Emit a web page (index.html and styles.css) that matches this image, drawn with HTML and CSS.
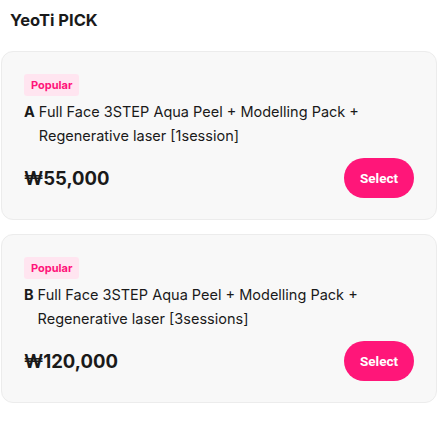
FILE: index.html
```html
<!DOCTYPE html>
<html lang="en">
<head>
<meta charset="UTF-8">
<meta name="viewport" content="width=device-width, initial-scale=1.0">
<title>YeoTi PICK</title>
<link rel="stylesheet" href="styles.css">
</head>
<body>
    <div class="pick">
        <h2 class="pickTitle">YeoTi PICK</h2>
        <div class="pickList">
            <div class="pickCard">
                <span class="badge">Popular</span>
                <div class="name">
                    <b class="letter">A</b>
                    <span>Full Face 3STEP Aqua Peel + Modelling Pack + Regenerative laser [1session]</span>
                </div>
                <div class="priceRow">
                    <div class="price">₩55,000</div>
                    <button class="selectBtn">Select</button>
                </div>
            </div>
            <div class="pickCard">
                <span class="badge">Popular</span>
                <div class="name">
                    <b class="letter">B</b>
                    <span>Full Face 3STEP Aqua Peel + Modelling Pack + Regenerative laser [3sessions]</span>
                </div>
                <div class="priceRow">
                    <div class="price">₩120,000</div>
                    <button class="selectBtn">Select</button>
                </div>
            </div>
        </div>
    </div>
</body>
</html>
```

FILE: styles.css
```css
  body {
    margin: 0;
    font-family: Inter, "Noto Sans", sans-serif;
    color: #1a1a1a;
    background: #fff;
  }
  .pick {
    width: 437px;
    padding-top: 10px;
  }
  .pickTitle {
    margin: 0 0 21px 10px;
    font-size: 16.5px;
    line-height: 20px;
    font-weight: 700;
  }
  .pickList {
    display: flex;
    flex-direction: column;
    gap: 14px;
  }
  .pickCard {
    margin-left: 1px;
    padding: 22px 22px 21px 22px;
    background-color: #f8f8f8;
    border: 1px solid #ececec;
    border-radius: 12px;
    display: flex;
    flex-direction: column;
    align-items: flex-start;
  }
  .badge {
    display: inline-block;
    height: 22px;
    line-height: 22px;
    padding: 0 7px;
    background-color: #ffe5f0;
    color: #ff137a;
    border-radius: 3px;
    font-size: 11px;
    font-weight: 700;
    margin-bottom: 4px;
  }
  .name {
    display: flex;
    gap: 4px;
    font-size: 14.5px;
    line-height: 24px;
    padding-right: 50px;
  }
  .letter {
    font-weight: 700;
  }
  .priceRow {
    align-self: stretch;
    display: flex;
    justify-content: space-between;
    align-items: center;
    margin-top: 10px;
  }
  .price {
    font-size: 18.5px;
    font-weight: 700;
  }
  .selectBtn {
    width: 70px;
    height: 40px;
    border: none;
    border-radius: 20px;
    background-color: #ff1679;
    color: #fff;
    font-family: Roboto, Inter, sans-serif;
    font-size: 13.5px;
    font-weight: 700;
    cursor: pointer;
  }
```
